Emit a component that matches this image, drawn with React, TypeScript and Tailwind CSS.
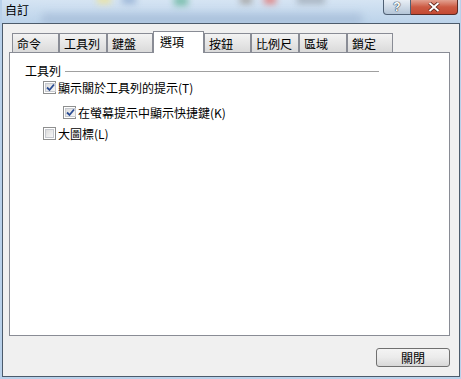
import { useState } from 'react'

const font = { fontFamily: '"Noto Sans CJK TC", "Liberation Sans", sans-serif' }

const tabs = [
  { label: '命令', w: 'w-[47px]' },
  { label: '工具列', w: 'w-[48px]' },
  { label: '鍵盤', w: 'w-[46px]' },
  { label: '選項', w: 'w-[51px]', active: true },
  { label: '按鈕', w: 'w-[47px]' },
  { label: '比例尺', w: 'w-[48px]' },
  { label: '區域', w: 'w-[48px]' },
  { label: '鎖定', w: 'w-[46px]' },
]

function CheckBox({ checked }: { checked: boolean }) {
  return (
    <span className="w-[13px] h-[13px] shrink-0 border border-[#8e8f8f] bg-white p-[1px] flex">
      <span className="flex-1 border border-[#c6c9cf] bg-gradient-to-br from-[#dcdcdc] to-[#f7f7f7] flex items-center justify-center">
        {checked && (
          <svg width="9" height="9" viewBox="0 0 9 9">
            <path d="M1 4.5 L3.5 7 L8 1.5" fill="none" stroke="#2a4c94" strokeWidth="1.8" />
          </svg>
        )}
      </span>
    </span>
  )
}

function Option({ label, checked, indent }: { label: string; checked: boolean; indent?: boolean }) {
  const [on, setOn] = useState(checked)
  return (
    <div
      className={`flex items-center gap-[2px] h-[13px] text-[12px] leading-none text-black ${indent ? 'ml-[53px]' : 'ml-[33px]'}`}
      onClick={() => setOn(!on)}
    >
      <CheckBox checked={on} />
      <span>{label}</span>
    </div>
  )
}

export default function App() {
  return (
    <div className="w-[461px] h-[379px] bg-[#b9d1ea] pl-[2px] pr-[1px] pb-[2px] flex flex-col overflow-hidden" style={font}>
      {/* Title bar */}
      <div className="relative h-[23px] shrink-0 bg-gradient-to-b from-[#d5e4f3] to-[#bcd3ea] overflow-hidden">
        <div className="absolute left-[40px] top-[14px] w-[320px] h-[10px] bg-[#9fb6d3] blur-[4px] opacity-70" />
        <div className="absolute left-[95px] top-[-4px] w-[14px] h-[8px] bg-[#e8e3a8] blur-[3px]" />
        <div className="absolute left-[120px] top-[-4px] w-[14px] h-[8px] bg-[#9db7d8] blur-[3px]" />
        <div className="absolute left-[172px] top-[-4px] w-[14px] h-[10px] bg-[#7fc0b0] blur-[3px]" />
        <div className="absolute left-[238px] top-[-4px] w-[12px] h-[8px] bg-[#a7a7a7] blur-[3px]" />
        <div className="absolute left-[262px] top-[-4px] w-[12px] h-[8px] bg-[#e08585] blur-[3px]" />
        <div className="absolute left-[295px] top-[-4px] w-[28px] h-[8px] bg-[#a7b3c0] blur-[3px]" />
        <span className="absolute left-[3px] top-[3px] text-[12px] leading-[14px] text-black">自訂</span>
        <div className="absolute right-[2px] top-0 flex">
          <div className="w-[28px] h-[15px] rounded-bl-[4px] border border-t-0 border-[#4f6074] bg-gradient-to-b from-[#e9eff6] to-[#b4c5d7] flex items-center justify-center text-[12px] font-bold text-white leading-none [text-shadow:0_0_1px_#2f3f52,0_0_1px_#2f3f52,0_0_1px_#2f3f52]" style={{ fontFamily: '"Liberation Sans", sans-serif' }}>
            ?
          </div>
          <div className="w-[47px] h-[15px] rounded-br-[4px] border border-t-0 border-l-0 border-[#5a2a24] bg-gradient-to-b from-[#e2a191] via-[#cc5a43] to-[#c44a33] flex items-center justify-center">
            <svg width="14" height="10" viewBox="0 0 14 10">
              <path d="M2.5 1 L11.5 9 M11.5 1 L2.5 9" stroke="#5a2218" strokeWidth="3.6" />
              <path d="M2.5 1 L11.5 9 M11.5 1 L2.5 9" stroke="#ffffff" strokeWidth="2" />
            </svg>
          </div>
        </div>
      </div>

      {/* Client area */}
      <div className="flex-1 border border-[#4c5b6b] bg-[#f0f0f0] flex flex-col pt-[7px] pl-[6px]">
        <div className="flex items-end h-[21px] pl-[3px]">
          {tabs.map((t) =>
            t.active ? (
              <div
                key={t.label}
                className={`${t.w} h-[22px] -mb-[1px] relative z-10 bg-white border border-b-0 border-[#898c95] pl-[6px] pt-[3px] text-[12px] leading-[14px] text-black`}
              >
                {t.label}
              </div>
            ) : (
              <div
                key={t.label}
                className={`${t.w} h-[19px] bg-gradient-to-b from-[#f3f3f3] to-[#dadada] border border-b-0 border-[#898c95] pl-[4px] pt-[3px] text-[12px] leading-[14px] text-black`}
              >
                {t.label}
              </div>
            )
          )}
        </div>

        {/* Panel */}
        <div className="w-[441px] h-[284px] bg-white border border-[#898c95] flex flex-col pt-[12px]">
          <div className="flex items-center pl-[15px] pr-[70px] h-[12px]">
            <span className="text-[12px] leading-none text-black">工具列</span>
            <div className="flex-1 ml-[4px] border-t border-[#a0a0a0]" />
          </div>
          <div className="flex flex-col mt-[4px]">
            <Option label="顯示關於工具列的提示(T)" checked />
            <div className="h-[12px]" />
            <Option label="在螢幕提示中顯示快捷鍵(K)" checked indent />
            <div className="h-[8px]" />
            <Option label="大圖標(L)" checked={false} />
          </div>
        </div>

        <div className="flex justify-end pr-[9px] mt-[12px]">
          <button className="w-[74px] h-[19px] rounded-[3px] border border-[#707070] bg-gradient-to-b from-[#f4f4f4] via-[#ebebeb] to-[#d8d8d8] text-[12px] leading-none text-black">
            關閉
          </button>
        </div>
      </div>
    </div>
  )
}
